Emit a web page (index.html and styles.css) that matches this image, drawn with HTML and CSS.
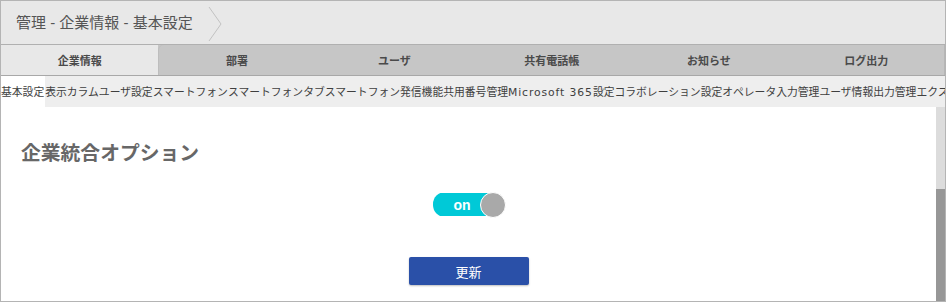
FILE: index.html
```html
<!DOCTYPE html>
<html lang="ja">
<head>
<meta charset="utf-8">
<link rel="stylesheet" href="styles.css">
</head>
<body>
<div class="frame">
  <header class="header">
    <h1 class="title">管理 - 企業情報 - 基本設定</h1>
    <svg class="chevron" width="16" height="40" viewBox="0 0 16 40"><polyline points="2,4 14,21 2,38" fill="none" stroke="#c2c2c2" stroke-width="1"/></svg>
  </header>
  <nav class="tabs">
    <div class="tab active">企業情報</div>
    <div class="tab first-inactive">部署</div>
    <div class="tab">ユーザ</div>
    <div class="tab">共有電話帳</div>
    <div class="tab">お知らせ</div>
    <div class="tab last">ログ出力</div>
  </nav>
  <div class="subnav">
    <span class="sub current">基本設定</span><span class="sub">表示カラム</span><span class="sub">ユーザ設定</span><span class="sub">スマートフォン</span><span class="sub">スマートフォンタブ</span><span class="sub">スマートフォン発信機能</span><span class="sub">共用番号管理</span><span class="sub"><span class="latin">Microsoft 365</span>設定</span><span class="sub">コラボレーション設定</span><span class="sub">オペレータ入力管理</span><span class="sub">ユーザ情報出力管理</span><span class="sub">エクスポート</span>
  </div>
  <div class="body">
    <main class="content">
      <h2 class="heading">企業統合オプション</h2>
      <div class="toggle-row">
        <div class="toggle">
          <span class="toggle-label">on</span>
          <span class="knob"></span>
        </div>
      </div>
      <div class="button-row">
        <button class="btn">更新</button>
      </div>
    </main>
    <div class="scrollbar">
      <div class="track"></div>
      <div class="thumb"></div>
    </div>
  </div>
</div>
</body>
</html>
```
FILE: styles.css
```css
* { box-sizing: border-box; }
html, body { margin: 0; padding: 0; background: #ffffff; }
body {
  font-family: "Liberation Sans", "Noto Sans CJK JP", sans-serif;
  color: #444;
}
.frame {
  width: 946px;
  height: 302px;
  border: 1px solid #b4b4b4;
  display: flex;
  flex-direction: column;
  overflow: hidden;
}
.header {
  height: 44px;
  flex: none;
  background: #e8e8e8;
  border-bottom: 1px solid #b0b0b0;
  display: flex;
  align-items: center;
  padding-left: 15px;
}
.title {
  margin: 0;
  font-size: 15px;
  font-weight: normal;
  color: #555;
  line-height: 20px;
  padding-top: 1px;
}
.chevron {
  margin-left: 14px;
  margin-top: 1px;
}
.tabs {
  height: 31px;
  flex: none;
  display: flex;
  background: #c6c6c6;
  border-bottom: 1px solid #a8a8a8;
}
.tab {
  flex: 1;
  display: flex;
  align-items: center;
  justify-content: center;
  font-size: 11px;
  font-weight: bold;
  color: #4a4a4a;
  background: #c6c6c6;
}
.tab.active {
  background: #e8e8e8;
}
.first-inactive {
  border-top-left-radius: 5px;
  box-shadow: inset 1px 0 0 #bdbdbd;
}
.tab.last {
  box-shadow: inset -1px 0 0 #b6b6b6;
}
.subnav {
  height: 31px;
  flex: none;
  background: #eeeeee;
  display: flex;
  white-space: nowrap;
  overflow: hidden;
}
.sub {
  display: flex;
  align-items: center;
  flex: none;
  font-size: 10.8px;
  color: #3f3f3f;
  line-height: 31px;
  padding-top: 1px;
}
.latin {
  font-family: "DejaVu Sans", sans-serif;
  font-size: 10.8px;
  letter-spacing: 0.9px;
}
.sub.current {
  background: #ffffff;
  padding-right: 1px;
}
.body {
  flex: 1;
  display: flex;
  min-height: 0;
}
.content {
  flex: 1;
  background: #fff;
  padding-top: 32px;
}
.heading {
  margin: 0 0 0 20px;
  font-size: 19.8px;
  line-height: 28px;
  font-weight: bold;
  color: #676767;
}
.toggle-row {
  margin-top: 25px;
  display: flex;
  justify-content: center;
}
.toggle {
  width: 72px;
  height: 25px;
  display: flex;
  align-items: center;
  background: linear-gradient(#00c9d7, #00c9d7) no-repeat 0 1px / 60px 23px;
  border-radius: 12px;
}
.toggle-label {
  flex: 1;
  text-align: center;
  color: #fff;
  font-weight: bold;
  font-size: 14px;
  line-height: 20px;
  padding-left: 12px;
  font-family: "Liberation Sans", sans-serif;
}
.knob {
  width: 26px;
  height: 26px;
  border-radius: 50%;
  background: #a9a9a9;
  border: 1.5px solid #fff;
  margin-right: -1px;
}
.button-row {
  margin-top: 40px;
  display: flex;
  justify-content: center;
}
.btn {
  width: 120px;
  height: 28px;
  border: none;
  border-radius: 2px;
  background: #2a50a8;
  color: #fff;
  font-family: "Liberation Sans", "Noto Sans CJK JP", sans-serif;
  font-size: 13px;
  box-shadow: 0 1px 2px rgba(0,0,0,0.25);
  padding: 0;
}
.scrollbar {
  width: 9px;
  flex: none;
  display: flex;
  flex-direction: column;
}
.track {
  height: 82px;
  background: #dcdcdc;
}
.thumb {
  flex: 1;
  background: #979797;
}
```
